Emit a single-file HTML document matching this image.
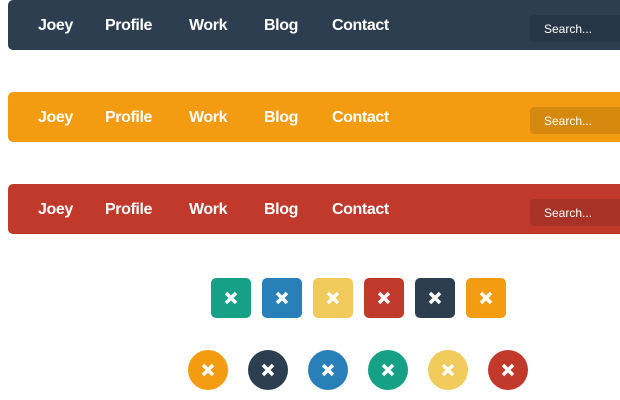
<!DOCTYPE html>
<html><head><style>
body{margin:0;width:620px;height:400px;background:#fff;position:relative;overflow:hidden;font-family:"Liberation Sans",sans-serif}
.nav{position:absolute;left:8px;width:640px;height:50px;border-radius:5px}
.nav span{position:absolute;top:17px;color:#fff;font-weight:bold;font-size:16px;letter-spacing:-0.4px}
.nav .s{position:absolute;left:522px;top:15px;width:120px;height:27px;border-radius:4px;background:rgba(0,0,0,0.12)}
.nav .s i{position:absolute;left:14px;top:7px;color:#fff;font-style:normal;font-size:12px}
.b{position:absolute;width:40px;height:40px;display:flex;align-items:center;justify-content:center}
.sq{top:278px;border-radius:5px}.ci{top:350px;border-radius:50%}
</style></head><body>
<div class="nav" style="top:0;background:#2c3e50"><span style="left:30px">Joey</span><span style="left:97px">Profile</span><span style="left:181px">Work</span><span style="left:256px">Blog</span><span style="left:324px">Contact</span><div class="s"><i>Search...</i></div></div>
<div class="nav" style="top:92px;background:#f39c12"><span style="left:30px">Joey</span><span style="left:97px">Profile</span><span style="left:181px">Work</span><span style="left:256px">Blog</span><span style="left:324px">Contact</span><div class="s"><i>Search...</i></div></div>
<div class="nav" style="top:184px;background:#c0392b"><span style="left:30px">Joey</span><span style="left:97px">Profile</span><span style="left:181px">Work</span><span style="left:256px">Blog</span><span style="left:324px">Contact</span><div class="s"><i>Search...</i></div></div>
<div class="b sq" style="left:211px;background:#16a085"><svg width="14" height="14"><path d="M2 2L12 12M12 2L2 12" stroke="#fff" stroke-width="3.5"/></svg></div>
<div class="b sq" style="left:262px;background:#2980b9"><svg width="14" height="14"><path d="M2 2L12 12M12 2L2 12" stroke="#fff" stroke-width="3.5"/></svg></div>
<div class="b sq" style="left:313px;background:#f0ca5a"><svg width="14" height="14"><path d="M2 2L12 12M12 2L2 12" stroke="#fff" stroke-width="3.5"/></svg></div>
<div class="b sq" style="left:364px;background:#c0392b"><svg width="14" height="14"><path d="M2 2L12 12M12 2L2 12" stroke="#fff" stroke-width="3.5"/></svg></div>
<div class="b sq" style="left:415px;background:#2c3e50"><svg width="14" height="14"><path d="M2 2L12 12M12 2L2 12" stroke="#fff" stroke-width="3.5"/></svg></div>
<div class="b sq" style="left:466px;background:#f39c12"><svg width="14" height="14"><path d="M2 2L12 12M12 2L2 12" stroke="#fff" stroke-width="3.5"/></svg></div>
<div class="b ci" style="left:188px;background:#f39c12"><svg width="14" height="14"><path d="M2 2L12 12M12 2L2 12" stroke="#fff" stroke-width="3.5"/></svg></div>
<div class="b ci" style="left:248px;background:#2c3e50"><svg width="14" height="14"><path d="M2 2L12 12M12 2L2 12" stroke="#fff" stroke-width="3.5"/></svg></div>
<div class="b ci" style="left:308px;background:#2980b9"><svg width="14" height="14"><path d="M2 2L12 12M12 2L2 12" stroke="#fff" stroke-width="3.5"/></svg></div>
<div class="b ci" style="left:368px;background:#16a085"><svg width="14" height="14"><path d="M2 2L12 12M12 2L2 12" stroke="#fff" stroke-width="3.5"/></svg></div>
<div class="b ci" style="left:428px;background:#f0ca5a"><svg width="14" height="14"><path d="M2 2L12 12M12 2L2 12" stroke="#fff" stroke-width="3.5"/></svg></div>
<div class="b ci" style="left:488px;background:#c0392b"><svg width="14" height="14"><path d="M2 2L12 12M12 2L2 12" stroke="#fff" stroke-width="3.5"/></svg></div>
</body></html>
